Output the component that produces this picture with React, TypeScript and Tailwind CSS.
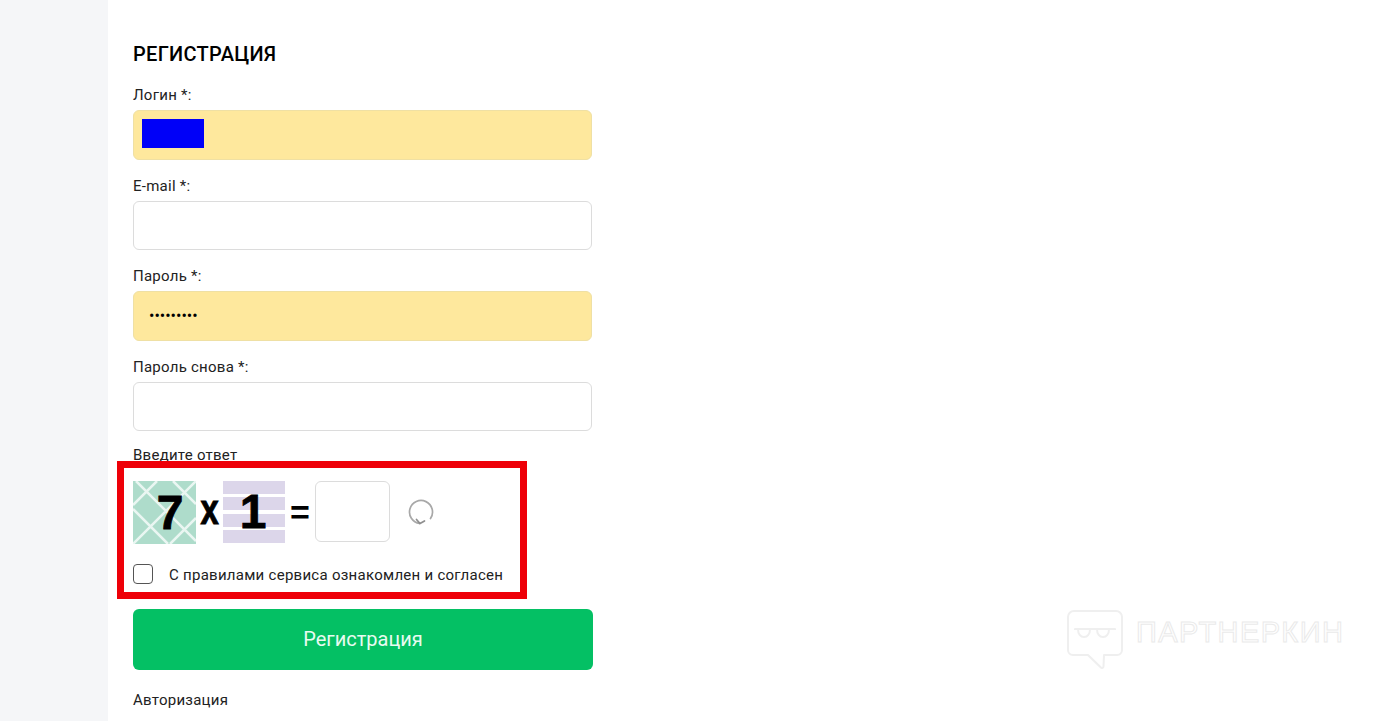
const inputClass = 'block h-[49.5px] w-[459px] rounded-[6px] border px-[15px] text-base text-black outline-none'

interface FieldProps {
  label: string
  filled?: boolean
  type?: string
  value?: string
  children?: React.ReactNode
}

const Field = ({ label, filled, type = 'text', value = '', children }: FieldProps) => (
  <div className="relative">
    <label className="mb-[5px] block h-[21px] pt-px text-[15px] leading-[21px] tracking-[0.25px] text-[#222]">{label}</label>
    <input
      type={type}
      value={value}
      readOnly
      className={`${inputClass} ${filled ? 'border-[#efe0a4] bg-[#fee89d]' : 'border-[#dcdcdc] bg-white'}`}
    />
    {children}
  </div>
)

const RefreshIcon = () => (
  <svg width="26" height="26" viewBox="0 0 26 26" fill="none" stroke="#a8a8a8" strokeWidth="1.7" strokeLinecap="round" strokeLinejoin="round">
    <path d="M22.5 19.5A11.5 11.5 0 1 0 11.5 24.4" />
    <path d="M8.5 20.5 12 24.6 16.5 22" stroke="#8f8f8f" />
  </svg>
)

const Watermark = () => (
  <div className="absolute left-[1066px] top-[609px] flex">
    <svg width="58" height="61" viewBox="0 0 58 61" fill="none" stroke="#efefef" strokeWidth="2" strokeLinejoin="round">
      <path d="M8 2h42a6 6 0 0 1 6 6v33a5 5 0 0 1-5 5H38l-.5 11.5a1.5 1.5 0 0 1-2.6 1L22 46H7a5 5 0 0 1-5-5V8a6 6 0 0 1 6-6z" />
      <path d="M9 21v-1h40v1" />
      <path d="M12 20c0 5 2.500 8 6 8s6-3 6-8M31 20c0 5 2.500 8 6 8s6-3 6-8" />
    </svg>
    <span className="ml-[12px] mt-[6px] font-['Liberation_Sans',sans-serif] text-[29px] leading-[34px] tracking-[1.4px] text-transparent [-webkit-text-stroke:1px_#eaeaea]">
      ПАРТНЕРКИН
    </span>
  </div>
)

const App = () => {
  return (
    <div className="relative h-[721px] w-[1394px] overflow-hidden bg-white font-['Roboto',sans-serif]">
      <div className="flex h-full">
        <div className="w-[108px] shrink-0 bg-[#f5f6f8]" />

        <div className="ml-[25px] w-[460px] pt-[41px]">
          <h1 className="h-[26px] text-[20px] font-medium leading-[26px] tracking-[0.3px] text-black">РЕГИСТРАЦИЯ</h1>

          <div className="mt-[17px] flex flex-col gap-[15px]">
            <Field label="Логин *:" filled>
              <div className="absolute left-[9px] top-[35px] h-[29px] w-[62px] bg-[#0000f8]" />
            </Field>
            <Field label="E-mail *:" />
            <Field label="Пароль *:" type="password" value="123456789" filled />
            <Field label="Пароль снова *:" />
          </div>

          {/* Captcha */}
          <div className="mt-[13px] h-[21px] pt-px text-[15px] leading-[21px] tracking-[0.25px] text-[#222]">Введите ответ</div>
          <div className="mt-[16px] flex h-[63px] items-start font-['Liberation_Sans',sans-serif] font-bold text-black">
            <div className="relative flex h-[63px] w-[63px] items-center justify-center overflow-hidden bg-[#aedccb]">
              <svg className="absolute inset-0" width="63" height="63" viewBox="0 0 63 63" stroke="#eaf6f2" strokeWidth="2.5">
                <path d="M3 0 63 60M0 28 35 63M40 0 63 23M24 0 0 24M63 0 0 63M63 37 37 63" />
              </svg>
              <span className="relative ml-[11px] text-[48px] leading-none [-webkit-text-stroke:0.8px_#000]">7</span>
            </div>
            <span className="w-[27px] scale-x-[0.78] pt-[9px] text-center text-[42px] leading-[40px] [-webkit-text-stroke:1px_#000]">x</span>
            <div className="relative flex h-[62px] w-[62px] flex-col justify-between bg-white">
              <div className="h-[13px] bg-[#dcd6ea]" />
              <div className="h-[13px] bg-[#dcd6ea]" />
              <div className="h-[13px] bg-[#dcd6ea]" />
              <div className="h-[13px] bg-[#dcd6ea]" />
              <span className="absolute inset-0 flex items-center justify-center pr-[2px] text-[48px] leading-none [-webkit-text-stroke:0.8px_#000]">1</span>
            </div>
            <span className="w-[30px] pt-[11px] text-center text-[34px] leading-[40px]">=</span>
            <input readOnly className="h-[61px] w-[75px] rounded-[6px] border border-[#dcdcdc] bg-white outline-none" />
            <div className="ml-[18px] mt-[18px]">
              <RefreshIcon />
            </div>
          </div>

          <div className="mt-5 flex h-5 items-center">
            <span className="h-5 w-5 rounded-[4px] border border-[#555] bg-white" />
            <span className="ml-[16px] pt-[2px] text-[15px] tracking-[0.27px] text-[#222]">С правилами сервиса ознакомлен и согласен</span>
          </div>

          <button className="mt-[25px] block h-[61px] w-[460px] rounded-[6px] bg-[#04c064] pb-[2px] text-center text-[20px] font-normal text-[#e8fbf1]">
            Регистрация
          </button>

          <a className="mt-5 block h-5 text-[15px] leading-5 tracking-[0.25px] text-[#222]">Авторизация</a>
        </div>
      </div>

      {/* red highlight drawn over the screenshot */}
      <div className="pointer-events-none absolute left-[117px] top-[461px] h-[138px] w-[410px] border-[7px] border-[#ee0008]" />
      <Watermark />
    </div>
  )
}

export default App
